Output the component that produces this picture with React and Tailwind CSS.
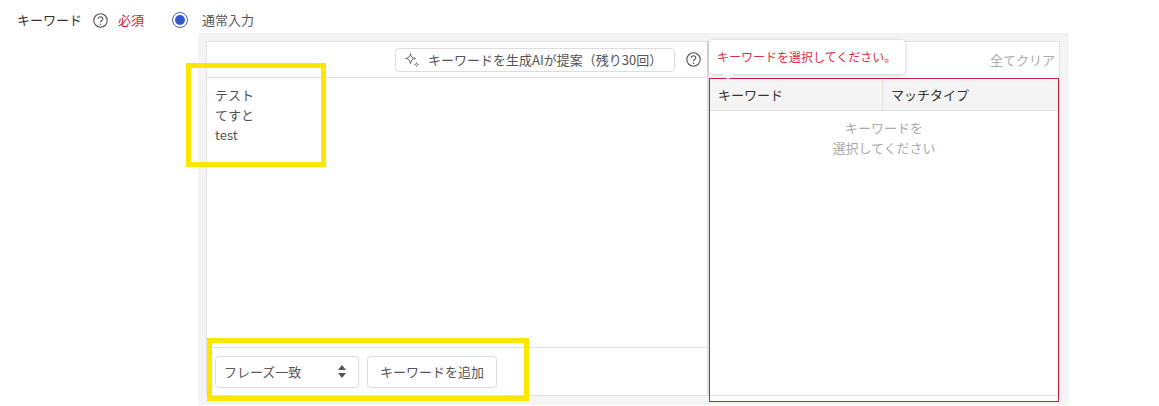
import React from "react";

function HelpIcon() {
  return (
    <svg width="15" height="15" viewBox="0 0 15 15" fill="none" className="shrink-0">
      <circle cx="7.500" cy="7.500" r="6.700" stroke="#555" strokeWidth="1.100" />
      <path d="M5.200 6c0-1.300 1-2.200 2.300-2.200s2.300.9 2.300 2.100c0 1.600-2.300 1.700-2.300 3.300" stroke="#555" strokeWidth="1.100" />
      <circle cx="7.500" cy="11.200" r=".8" fill="#555" />
    </svg>
  );
}

function SparkleIcon() {
  return (
    <svg width="16" height="16" viewBox="0 0 16 16" fill="none" className="shrink-0">
      <path d="M6.500 1.500c.6 3.500 1.500 4.400 5 5-3.500.6-4.400 1.500-5 5-.6-3.500-1.500-4.400-5-5 3.500-.6 4.400-1.500 5-5z" stroke="#666" strokeWidth="1" strokeLinejoin="round" />
      <path d="M12.500 10.500c.2 1.300.7 1.800 2 2-1.300.2-1.800.7-2 2-.2-1.300-.7-1.800-2-2 1.300-.2 1.800-.7 2-2z" stroke="#888" strokeWidth="1" strokeLinejoin="round" />
    </svg>
  );
}

export default function App() {
  return (
    <div className="relative w-[1159px] h-[406px] overflow-hidden bg-white text-[13px] leading-5 text-[#333] font-['Noto_Sans_CJK_JP','Noto_Sans',sans-serif]">
      {/* label row */}
      <div className="flex items-center h-[33px] pl-[17px] pt-[7px]">
        <span className="w-[76px] text-[#333]">キーワード</span>
        <HelpIcon />
        <span className="ml-[10px] w-[28px] text-[#c7243a]">必須</span>
        <span className="ml-[26px] flex items-center justify-center w-4 h-4 rounded-full border border-[#3f5fc8]">
          <span className="w-[10px] h-[10px] rounded-full bg-[#3558c8]" />
        </span>
        <span className="ml-[14px] text-[#555]">通常入力</span>
      </div>

      {/* panel */}
      <div className="ml-[198px] w-[871px] h-[372px] bg-[#f4f4f4] p-2">
        <div className="flex h-[355px] w-[854px] bg-white border border-[#e0e0e0]">
          {/* left pane */}
          <div className="flex flex-col w-[502px] shrink-0 border-r-2 border-[#e0e0e0]">
            <div className="flex items-center justify-end h-[36px] shrink-0 border-b border-[#e0e0e0] pr-[6px]">
              <button className="flex items-center w-[280px] h-[24px] pl-2 bg-white border border-[#ddd] rounded-sm text-[#555]">
                <SparkleIcon />
                <span className="ml-2">キーワードを生成AIが提案（残り30回）</span>
              </button>
              <span className="ml-[11px]">
                <HelpIcon />
              </span>
            </div>
            <div className="flex-1 pl-2 pt-[7px] text-[#555]">
              <div>テスト</div>
              <div>てすと</div>
              <div>test</div>
            </div>
            <div className="flex items-center gap-2 h-[48px] shrink-0 border-t border-[#e0e0e0] pl-2">
              <div className="flex items-center justify-between w-[144px] h-[32px] pl-2 pr-[11px] border border-[#ddd] rounded-sm text-[#555]">
                <span>フレーズ一致</span>
                <svg width="10" height="15" viewBox="0 0 10 15" fill="#555">
                  <path d="M5 1l4 5H1zM5 14L1 9h8z" />
                </svg>
              </div>
              <button className="w-[130px] h-[32px] border border-[#ddd] rounded-sm text-[#555]">キーワードを追加</button>
            </div>
          </div>

          {/* right pane */}
          <div className="relative flex-1 flex flex-col min-w-0">
            <div className="flex items-center justify-end h-[36px] shrink-0 pr-1 text-[#aaa]">全てクリア</div>
            <div className="flex flex-col h-[324px] shrink-0 bg-white border border-[#c41e3a]">
              <div className="flex h-[32px] shrink-0 bg-[#f4f4f4] border-b border-[#e0e0e0] text-[#333]">
                <div className="flex items-center w-[173px] pl-2 border-r border-[#e0e0e0]">キーワード</div>
                <div className="flex items-center pl-2">マッチタイプ</div>
              </div>
              <div className="flex-1 pt-[7px] text-center text-[#aaa]">
                <div>キーワードを</div>
                <div>選択してください</div>
              </div>
              <div className="h-[6px] shrink-0 border-t border-[#e0e0e0]" />
            </div>

            {/* tooltip */}
            <div className="absolute left-0 top-[-2px] w-[196px] h-[34px] flex items-center pl-2 whitespace-nowrap bg-white rounded-sm shadow-[0_1px_5px_rgba(0,0,0,0.22)] text-[12px] text-[#d9304a]">
              キーワードを選択してください。
              <span className="absolute left-[15px] bottom-[-4px] w-2 h-2 rotate-45 bg-white" />
            </div>
          </div>
        </div>
      </div>

      {/* yellow annotations */}
      <div className="absolute left-[186px] top-[63px] w-[140px] h-[104px] border-[5px] border-[#ffe600]" />
      <div className="absolute left-[207px] top-[338px] w-[322px] h-[63px] border-[5px] border-[#ffe600]" />
    </div>
  );
}
